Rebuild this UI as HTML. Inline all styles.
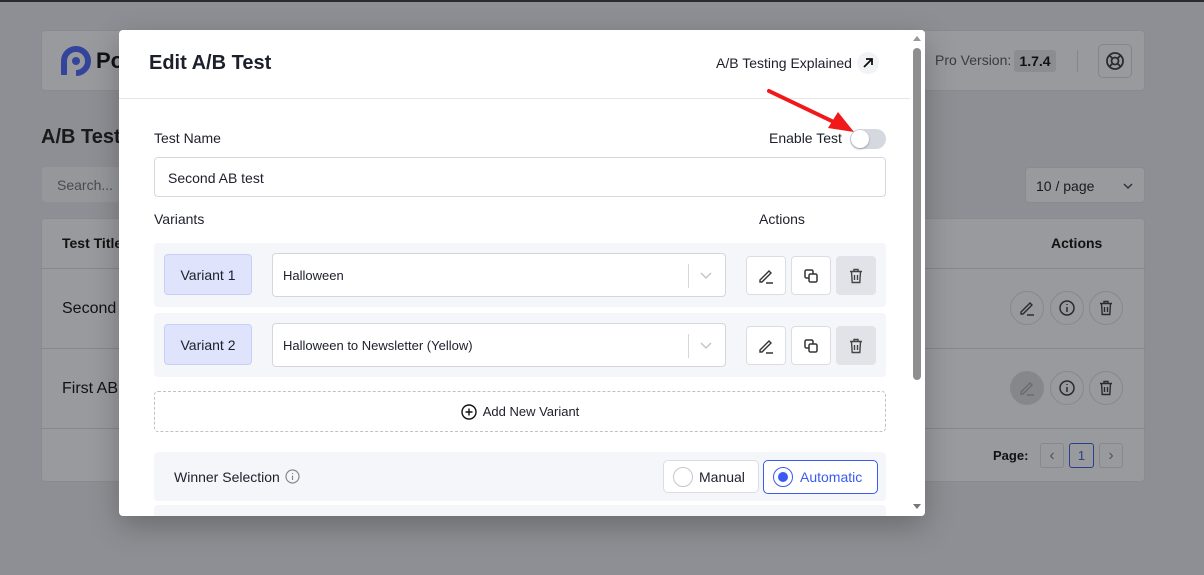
<!DOCTYPE html>
<html><head><meta charset="utf-8"><style>
*{box-sizing:border-box;margin:0;padding:0}
body{width:1204px;height:575px;overflow:hidden;background:#8e8f94;font-family:"Liberation Sans",sans-serif;position:relative;color:#1d1f2b}
.a{position:absolute}
.card{background:#999a9e;border:1px solid #8a8b90;border-radius:4px}
.ib{position:absolute;width:34px;height:34px;border:1px solid #87888c;border-radius:50%;display:flex;align-items:center;justify-content:center}
.m{position:absolute;left:119px;top:30px;width:806px;height:486px;background:#fff;border-radius:4px;overflow:hidden;box-shadow:0 10px 30px rgba(0,0,0,.25)}
.lbl{position:absolute;font-size:14px;color:#1d1f2b}
.row{position:absolute;left:35px;width:732px;height:64px;background:#f5f6fa;border-radius:4px}
.badge{position:absolute;left:10px;top:11px;width:88px;height:41px;background:#dfe3fc;border:1px solid #c8cef6;border-radius:4px;font-size:14px;display:flex;align-items:center;justify-content:center}
.sel{position:absolute;left:118px;top:10px;width:454px;height:44px;background:#fff;border:1px solid #d4d6dd;border-radius:4px;font-size:13px;padding:14px 10px}
.sel .d{position:absolute;right:36px;top:10px;width:1px;height:24px;background:#d4d6dd}
.sel .c{position:absolute;right:12px;top:14px}
.bt{position:absolute;top:13px;width:40px;height:39px;background:#fff;border:1px solid #dcdde2;border-radius:4px;display:flex;align-items:center;justify-content:center}
</style></head><body>
<div class="a" style="left:0;top:0;width:1204px;height:2px;background:#2a2b30"></div>
<div class="a card" style="left:41px;top:30px;width:1104px;height:61px"></div>
<svg class="a" style="left:60px;top:45px" width="32" height="32" viewBox="0 0 32 32"><path d="M4 30V16A12 12 0 1 1 16 28" fill="none" stroke="#34449a" stroke-width="6"/><circle cx="16" cy="16" r="4" fill="#34449a"/></svg>
<div class="a" style="left:96px;top:48px;font-size:22px;font-weight:bold;color:#111">Po</div>
<div class="a" style="left:935px;top:52px;font-size:14px;color:#3a3b40">Pro Version:</div>
<div class="a" style="left:1014px;top:50px;width:42px;height:22px;background:#8c8d91;border-radius:3px;font-size:14px;font-weight:bold;text-align:center;line-height:22px;color:#111">1.7.4</div>
<div class="a" style="left:1077px;top:50px;width:1px;height:22px;background:#85868a"></div>
<div class="a" style="left:1098px;top:44px;width:34px;height:34px;border:1px solid #85868a;border-radius:5px"></div>
<svg class="a" style="left:1104px;top:50px" width="22" height="22" viewBox="0 0 22 22" fill="none" stroke="#2a2b30" stroke-width="1.8"><circle cx="11" cy="11" r="8"/><circle cx="11" cy="11" r="3.5"/><path d="M5.5 5.5l3 3M16.5 5.5l-3 3M5.5 16.5l3-3M16.5 16.5l-3-3"/></svg>
<div class="a" style="left:41px;top:126px;font-size:20px;font-weight:bold;color:#1a1a1a">A/B Test</div>
<div class="a card" style="left:42px;top:167px;width:100px;height:35px;border:none;background:#96979b;font-size:14px;color:#4a4b50;padding:10px 15px">Search...</div>
<div class="a card" style="left:1025px;top:167px;width:120px;height:36px;font-size:14px;color:#1a1a1a;padding:10px 10px">10 / page<svg class="a" style="left:96px;top:13px" width="12" height="10" viewBox="0 0 12 10"><path d="M2 3l4 4 4-4" fill="none" stroke="#333" stroke-width="1.5"/></svg></div>
<div class="a card" style="left:41px;top:218px;width:1104px;height:264px"></div>
<div class="a" style="left:41px;top:268px;width:1104px;height:1px;background:#87888c"></div>
<div class="a" style="left:41px;top:348px;width:1104px;height:1px;background:#87888c"></div>
<div class="a" style="left:41px;top:428px;width:1104px;height:1px;background:#87888c"></div>
<div class="a" style="left:62px;top:235px;font-size:14px;font-weight:bold;color:#111">Test Title</div>
<div class="a" style="left:1051px;top:235px;font-size:14px;font-weight:bold;color:#111">Actions</div>
<div class="a" style="left:62px;top:300px;font-size:16px;color:#111">Second</div>
<div class="a" style="left:62px;top:380px;font-size:16px;color:#111">First AB</div>
<div class="ib" style="left:1010px;top:291px"><svg width="18" height="18" viewBox="0 0 18 18" fill="none" stroke="#2a2b30" stroke-width="1.4"><path d="M3 13l9-9 2 2-9 9H3zM9 16h7"/></svg></div>
<div class="ib" style="left:1050px;top:291px"><svg width="18" height="18" viewBox="0 0 18 18" fill="none" stroke="#2a2b30" stroke-width="1.5"><circle cx="9" cy="9" r="7"/><path d="M9 8v5M9 5v1"/></svg></div>
<div class="ib" style="left:1089px;top:291px"><svg width="14" height="16" viewBox="0 0 14 16" fill="none" stroke="#2a2b30" stroke-width="1.4"><path d="M1 3.5h12M5 3.5V1.5h4v2M2.5 3.5l.7 11h7.6l.7-11M5.5 7v5M8.5 7v5"/></svg></div>
<div class="ib" style="left:1010px;top:371px;background:#86878b"><svg width="18" height="18" viewBox="0 0 18 18" fill="none" stroke="#6a6b70" stroke-width="1.4"><path d="M3 13l9-9 2 2-9 9H3zM9 16h7"/></svg></div>
<div class="ib" style="left:1050px;top:371px"><svg width="18" height="18" viewBox="0 0 18 18" fill="none" stroke="#2a2b30" stroke-width="1.5"><circle cx="9" cy="9" r="7"/><path d="M9 8v5M9 5v1"/></svg></div>
<div class="ib" style="left:1089px;top:371px"><svg width="14" height="16" viewBox="0 0 14 16" fill="none" stroke="#2a2b30" stroke-width="1.4"><path d="M1 3.5h12M5 3.5V1.5h4v2M2.5 3.5l.7 11h7.6l.7-11M5.5 7v5M8.5 7v5"/></svg></div>
<div class="a" style="left:993px;top:448px;font-size:13px;font-weight:bold;color:#111">Page:</div>
<div class="a" style="left:1040px;top:443px;width:24px;height:25px;border:1px solid #87888c;border-radius:3px;text-align:center;line-height:23px;color:#555">‹</div>
<div class="a" style="left:1069px;top:443px;width:25px;height:25px;border:1px solid #2c3f8a;border-radius:3px;text-align:center;line-height:23px;font-size:13px;color:#2c3f8a">1</div>
<div class="a" style="left:1099px;top:443px;width:24px;height:25px;border:1px solid #87888c;border-radius:3px;text-align:center;line-height:23px;color:#555">›</div>

<div class="m">
<div class="a" style="left:30px;top:22px;font-size:20px;font-weight:bold;color:#1d1f2b">Edit A/B Test</div>
<div class="a" style="left:597px;top:25px;font-size:14px">A/B Testing Explained</div>
<div class="a" style="left:738px;top:22px;width:22px;height:22px;border-radius:50%;background:#f2f3f5"></div>
<svg class="a" style="left:743px;top:27px" width="12" height="12" viewBox="0 0 12 12" fill="none" stroke="#111" stroke-width="1.8"><path d="M2 10L10 2M4 2h6v6"/></svg>
<div class="a" style="left:0;top:68px;width:791px;height:1px;background:#e5e6ea"></div>
<div class="lbl" style="left:35px;top:100px">Test Name</div>
<div class="lbl" style="left:650px;top:100px">Enable Test</div>
<div class="a" style="left:731px;top:99px;width:36px;height:20px;border-radius:10px;background:#d6d8df"></div>
<div class="a" style="left:732px;top:100px;width:18px;height:18px;border-radius:50%;background:#fff;box-shadow:0 1px 2px rgba(0,0,0,.3)"></div>
<div class="a" style="left:35px;top:127px;width:732px;height:40px;border:1px solid #d6d8e0;border-radius:4px;font-size:14px;padding:12px 13px">Second AB test</div>
<div class="lbl" style="left:35px;top:181px">Variants</div>
<div class="lbl" style="left:640px;top:181px">Actions</div>
<div class="row" style="top:213px"><div class="badge">Variant 1</div><div class="sel">Halloween<div class="d"></div><svg class="c" width="14" height="14" viewBox="0 0 14 14"><path d="M2 5l5 5 5-5" fill="none" stroke="#c4c6cc" stroke-width="1.5"/></svg></div>
<div class="bt" style="left:592px"><svg width="18" height="18" viewBox="0 0 18 18" fill="none" stroke="#333" stroke-width="1.4"><path d="M3 13l9-9 2 2-9 9H3zM9 16h7"/></svg></div>
<div class="bt" style="left:637px"><svg width="16" height="16" viewBox="0 0 16 16" fill="none" stroke="#333" stroke-width="1.5"><rect x="2" y="2" width="8" height="8" rx="1.5"/><rect x="6" y="6" width="8" height="8" rx="1.5" fill="#fff"/></svg></div>
<div class="bt" style="left:682px;background:#e2e3e8;border-color:#e2e3e8"><svg width="14" height="16" viewBox="0 0 14 16" fill="none" stroke="#444" stroke-width="1.4"><path d="M1 3.5h12M5 3.5V1.5h4v2M2.5 3.5l.7 11h7.6l.7-11M5.5 7v5M8.5 7v5"/></svg></div></div>
<div class="row" style="top:283px"><div class="badge">Variant 2</div><div class="sel">Halloween to Newsletter (Yellow)<div class="d"></div><svg class="c" width="14" height="14" viewBox="0 0 14 14"><path d="M2 5l5 5 5-5" fill="none" stroke="#c4c6cc" stroke-width="1.5"/></svg></div>
<div class="bt" style="left:592px"><svg width="18" height="18" viewBox="0 0 18 18" fill="none" stroke="#333" stroke-width="1.4"><path d="M3 13l9-9 2 2-9 9H3zM9 16h7"/></svg></div>
<div class="bt" style="left:637px"><svg width="16" height="16" viewBox="0 0 16 16" fill="none" stroke="#333" stroke-width="1.5"><rect x="2" y="2" width="8" height="8" rx="1.5"/><rect x="6" y="6" width="8" height="8" rx="1.5" fill="#fff"/></svg></div>
<div class="bt" style="left:682px;background:#e2e3e8;border-color:#e2e3e8"><svg width="14" height="16" viewBox="0 0 14 16" fill="none" stroke="#444" stroke-width="1.4"><path d="M1 3.5h12M5 3.5V1.5h4v2M2.5 3.5l.7 11h7.6l.7-11M5.5 7v5M8.5 7v5"/></svg></div></div>
<div class="a" style="left:35px;top:361px;width:732px;height:41px;border:1px dashed #bfc1c8;border-radius:4px;font-size:13px;display:flex;align-items:center;justify-content:center;gap:6px"><svg width="16" height="16" viewBox="0 0 16 16" fill="none" stroke="#111" stroke-width="1.4"><circle cx="8" cy="8" r="7"/><path d="M8 4.5v7M4.5 8h7"/></svg>Add New Variant</div>
<div class="a" style="left:35px;top:422px;width:732px;height:49px;background:#f5f6fa;border-radius:4px"></div>
<div class="a" style="left:35px;top:475px;width:732px;height:20px;background:#f5f6fa;border-radius:4px"></div>
<div class="lbl" style="left:55px;top:439px">Winner Selection</div>
<svg class="a" style="left:166px;top:439px" width="15" height="15" viewBox="0 0 15 15" fill="none" stroke="#888" stroke-width="1.2"><circle cx="7.5" cy="7.5" r="6.5"/><path d="M7.5 6.5v4.5M7.5 4v1"/></svg>
<div class="a" style="left:544px;top:430px;width:96px;height:33px;background:#fff;border:1px solid #dcdde3;border-radius:5px"></div>
<div class="a" style="left:554px;top:437px;width:20px;height:20px;border:1px solid #c4c6cc;border-radius:50%"></div>
<div class="lbl" style="left:580px;top:439px">Manual</div>
<div class="a" style="left:644px;top:430px;width:115px;height:34px;background:#fff;border:1px solid #3b5bf0;border-radius:5px"></div>
<div class="a" style="left:654px;top:437px;width:20px;height:20px;border:1px solid #3b5bf0;border-radius:50%"></div>
<div class="a" style="left:659px;top:442px;width:10px;height:10px;background:#3b5bf0;border-radius:50%"></div>
<div class="lbl" style="left:681px;top:439px;color:#3b5bf0">Automatic</div>
<div class="a" style="left:791px;top:0;width:15px;height:486px;background:#fff"></div>
<div class="a" style="left:794px;top:18px;width:8px;height:332px;background:#8e8e8e;border-radius:4px"></div>
<div class="a" style="left:794px;top:6px;width:0;height:0;border-left:4px solid transparent;border-right:4px solid transparent;border-bottom:5px solid #999"></div>
<div class="a" style="left:794px;top:474px;width:0;height:0;border-left:4px solid transparent;border-right:4px solid transparent;border-top:5px solid #777"></div>
</div>
<svg class="a" style="left:760px;top:82px" width="100" height="56" viewBox="0 0 100 56"><path d="M9 9L78 42" stroke="#f01818" stroke-width="4" stroke-linecap="round"/><path d="M94 50L68 46L78 30Z" fill="#f01818"/></svg>
</body></html>
